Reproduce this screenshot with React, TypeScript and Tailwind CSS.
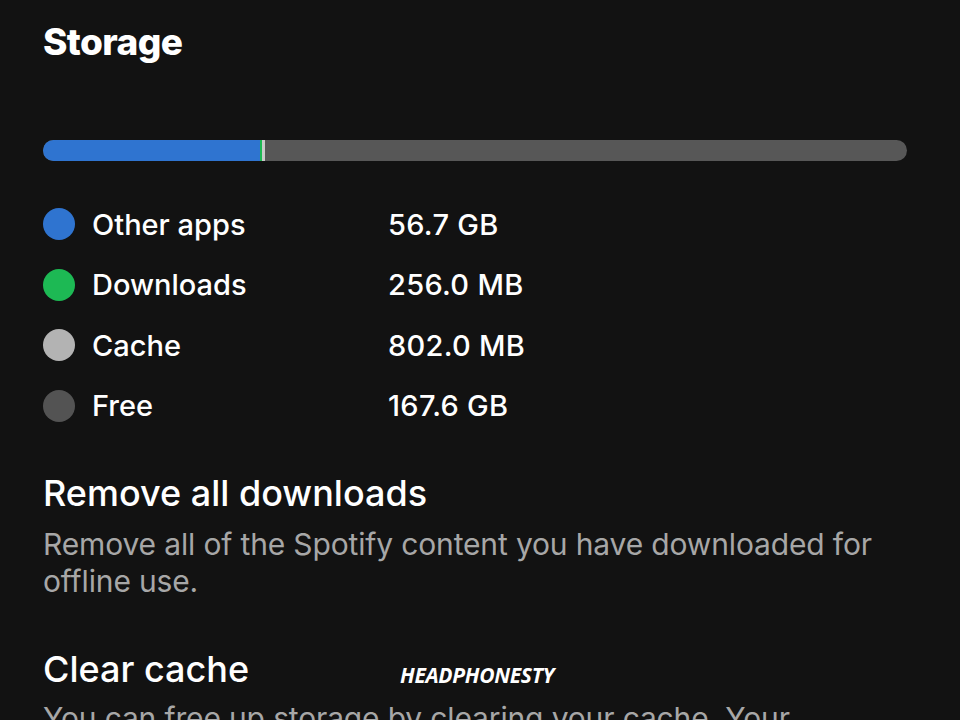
const items = [
  { label: "Other apps", value: "56.7 GB", dot: "bg-[#2f74d0]" },
  { label: "Downloads", value: "256.0 MB", dot: "bg-[#1db954]" },
  { label: "Cache", value: "802.0 MB", dot: "bg-[#b3b3b3]" },
  { label: "Free", value: "167.6 GB", dot: "bg-[#535353]" },
];

export default function App() {
  return (
    <div className="relative h-[720px] w-[960px] overflow-hidden bg-[#121212] text-white font-['Inter','Liberation_Sans',sans-serif]">
      <div className="px-[43px] pt-[22px]">
        <h1 className="text-[37px] leading-[40px] font-extrabold tracking-[-0.6px]">Storage</h1>

        <div className="mt-[78px] flex h-[21px] w-[864px] overflow-hidden rounded-full bg-[#575757]">
          <div className="h-full w-[217px] bg-[#2f74d0]" />
          <div className="h-full w-[2px] bg-[#1db954]" />
          <div className="h-full w-[3px] bg-[#c9c9c9]" />
        </div>

        <div className="mt-[33px] flex flex-col">
          {items.map((it) => (
            <div key={it.label} className="flex h-[60.5px] items-center">
              <span className={`h-[32px] w-[32px] shrink-0 rounded-full ${it.dot}`} />
              <span className="ml-[17px] w-[296px] text-[29px] font-medium">{it.label}</span>
              <span className="text-[29px] font-medium tracking-[0.3px]">{it.value}</span>
            </div>
          ))}
        </div>

        <div className="mt-[37px]">
          <h2 className="text-[36px] leading-[40px] font-medium">Remove all downloads</h2>
          <p className="mt-[13px] w-[870px] text-[30px] leading-[37px] text-[#a7a7a7] tracking-[-0.15px]">
            Remove all of the Spotify content you have downloaded for offline use.
          </p>
        </div>

        <div className="mt-[49px]">
          <h2 className="text-[36px] leading-[40px] font-medium">Clear cache</h2>
          <p className="mt-[11px] w-[870px] text-[30px] leading-[37px] text-[#a7a7a7] tracking-[-0.15px]">
            You can free up storage by clearing your cache. Your downloads won't be removed.
          </p>
        </div>
      </div>

      <div className="absolute left-[400px] top-[660px] text-[21px] font-bold italic text-white font-['Open_Sans',sans-serif] tracking-[-0.3px]">
        HEADPHONESTY
      </div>
    </div>
  );
}
